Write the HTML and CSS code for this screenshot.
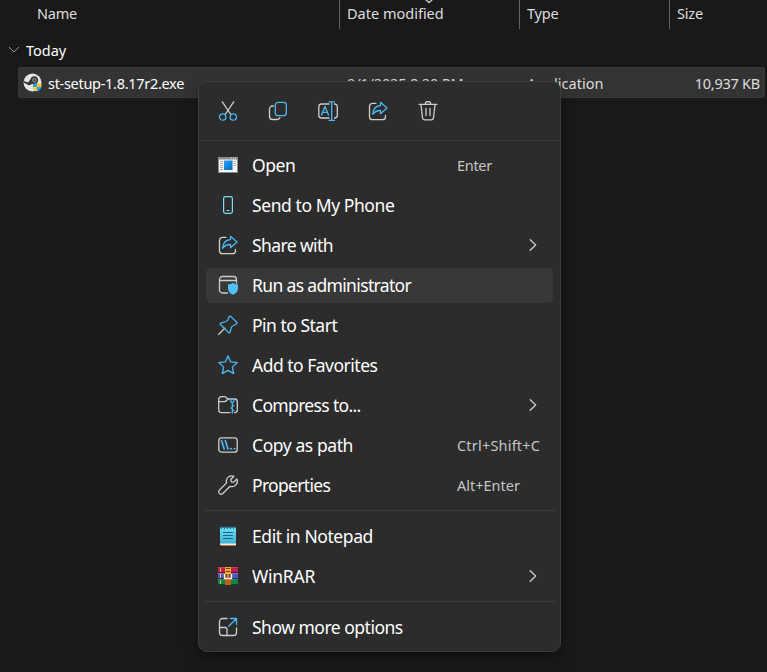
FILE: index.html
```html
<!DOCTYPE html>
<html lang="en">
<head>
<meta charset="utf-8">
<title>Downloads</title>
<link rel="stylesheet" href="styles.css">
</head>
<body>
<svg width="0" height="0" class="defs">
  <defs>
    <symbol id="share" viewBox="0 0 20 20"><path class="w" d="M8 2.3H4.5A3 3 0 0 0 1.5 5.3v10.4a3 3 0 0 0 3 3h10a3 3 0 0 0 3-3v-1.2"/><path class="b" d="M12.5 1.3 19 7l-6.500 5.700V9.500C9 9.400 6.800 10.500 4.700 13.300 4.900 8.500 7.500 5 12.500 4.500z"/></symbol>
    <symbol id="chev" viewBox="0 0 8 12"><path class="w" d="M1.200.7 6.700 6l-5.500 5.300"/></symbol>
    <linearGradient id="win" x1="0" y1="0" x2="1" y2="1"><stop offset="0" stop-color="#2aa0f2"/><stop offset="1" stop-color="#0568c4"/></linearGradient>
    <linearGradient id="note" x1="0" y1="0" x2="0" y2="1"><stop offset="0" stop-color="#6adcf6"/><stop offset="1" stop-color="#3fb3d6"/></linearGradient>
  </defs>
</svg>
<main class="explorer">
  <header class="columns">
    <div class="col name">Name</div>
    <div class="col date"><span class="date-label">Date modified</span><svg class="sort" width="8" height="4" viewBox="0 0 8 4"><path class="w" d="M1 0l3 2.500L7 0"/></svg></div>
    <div class="col type">Type</div>
    <div class="col size">Size</div>
  </header>
  <div class="group"><svg width="12" height="8" viewBox="0 0 12 8"><path d="M1 1l5 5 5-5" fill="none" stroke="#999"/></svg><span>Today</span></div>
  <div class="file">
    <svg class="app" width="19" height="19" viewBox="0 0 19 19"><circle cx="9.500" cy="9.500" r="9" fill="#e6e6e6"/><path d="M.6 9.500l5 2.800c1.500 0 2.500-.8 4.400-1.500a3.900 3.900 0 1 0-2.500-4.500L5 9.500.7 8z" fill="#333"/><circle cx="11.400" cy="7.200" r="1.800" fill="#444" stroke="#999"/><path d="M10 11l4-1v4H10z" fill="#259fe5"/><path d="M14 10l4.500 1v3H14zM10 14h4v4.500c-2-.8-3.600-2-4-4.500z" fill="#ffc92b"/><path d="M14 14h4.500c-.4 2.300-2 3.700-4.500 4.500z" fill="#259fe5"/></svg>
    <span class="fname">st-setup-1.8.17r2.exe</span><span class="fdate">9/1/2025 8:20 PM</span><span class="ftype">Application</span><span class="fsize">10,937 KB</span>
  </div>
</main>
<nav class="menu">
  <div class="tools">
    <svg class="icon" viewBox="0 0 20 20"><path class="w" d="M4.300.8 12.800 13.500M15.700.8 7.200 13.500"/><circle class="b" cx="4.700" cy="16" r="3.200"/><circle class="b" cx="15.300" cy="16" r="3.200"/></svg>
    <svg class="icon" viewBox="0 0 20 20"><path class="w" d="M5.500 5H4.500A3 3 0 0 0 1.500 8v7.500a3 3 0 0 0 3 3h4.700a3 3 0 0 0 2.700-2"/><rect class="b" x="7.300" y="1.300" width="11" height="13.400" rx="2.800"/></svg>
    <svg class="icon" viewBox="0 0 20 20"><path class="w" d="M11 3H3.500A2.800 2.800 0 0 0 .8 5.800v8.400A2.800 2.800 0 0 0 3.500 17H11M16.500 3a2.800 2.800 0 0 1 2.800 2.800v8.400a2.800 2.800 0 0 1-2.800 2.800"/><path class="b" d="M11 .8h5.500M11 19.300h5.500M13.700.8v18.500M3.500 14 7 5.500l3.500 8.500M4.700 11.300h4.700"/></svg>
    <svg class="icon" viewBox="0 0 20 20"><use href="#share"/></svg>
    <svg class="icon" viewBox="0 0 20 20"><path class="w" d="M1 3.300h18M7.300 3V2.700a2.700 2.200 0 0 1 5.400 0V3M3 3.500l1.500 13.300a2.300 2.300 0 0 0 2.300 2h6.400a2.300 2.300 0 0 0 2.300-2L17 3.500M8 7.500v7M12 7.500v7"/></svg>
  </div>
  <div class="items">
    <div class="item"><svg class="icon" viewBox="0 0 20 20"><path d="M0 2h20v16H0z" fill="#8b8b8b"/><path d="M1 4.500h18V17H1z" fill="#f6f6f6"/><path d="M13 3h1M15 3h1M17 3h1" stroke="#eee"/><path d="M6 5.500h8.500V15H6z" fill="url(#win)"/><path d="M2 6.500h3M2 8.500h3M2 10.500h3M2 12.500h3M2 14.500h3M15.500 6.500H18M15.500 8.500H18M15.500 10.500H18" stroke="#aaa"/></svg><span class="label open">Open</span><span class="key enter">Enter</span></div>
    <div class="item"><svg class="icon" viewBox="0 0 20 20"><rect x="5.600" y="1.600" width="8.800" height="16.800" rx="1.800" fill="none" stroke="#7fdcf5" stroke-width="1.200"/><path d="M8.500 15.500h3" stroke="#7fdcf5"/></svg><span class="label send">Send to My Phone</span></div>
    <div class="item"><svg class="icon" viewBox="0 0 20 20"><use href="#share"/></svg><span class="label share">Share with</span><svg class="chev"><use href="#chev"/></svg></div>
    <div class="item hot"><svg class="icon" viewBox="0 0 20 20"><path class="w" d="M9.500 18H4.500a3 3 0 0 1-3-3V4.500a3 3 0 0 1 3-3h11a3 3 0 0 1 3 3V8M1.500 5.500h17"/><path d="M15 7.800c1.500 1.200 3.200 1.600 5 1.700v4c0 3-2 5-5 6.300-3-1.300-5-3.300-5-6.300v-4c1.800-.1 3.500-.5 5-1.700z" fill="#4fc0fa"/></svg><span class="label run">Run as administrator</span></div>
    <div class="item"><svg class="icon" viewBox="0 0 20 20"><path class="w" d="M6.800 13.200.5 19.500"/><path class="b" d="M12.200.9 19.100 7.800C18.800 9 18 9.400 14.500 11c-1 .5-1.200 1-2.500 6.300-.5.700-1 .7-1.500.2L2.500 9.500c-.5-.5-.4-1 .2-1.300L8 6.500c1-.4 1.300-.8 1.800-1.800 1.200-2.600 1.400-3.400 2.400-3.800z"/></svg><span class="label pin">Pin to Start</span></div>
    <div class="item"><svg class="icon" viewBox="0 0 20 20"><path class="b" d="m10 .9 2.700 6 6.500.7-4.800 4.500 1.300 6.500L10 15.400l-5.700 3.200 1.300-6.500L.8 7.600l6.500-.7z"/></svg><span class="label fav">Add to Favorites</span></div>
    <div class="item"><svg class="icon" viewBox="0 0 20 20"><path class="w" d="M12 17.700H3.500A2.800 2.800 0 0 1 .7 15V4.500a2.800 2.800 0 0 1 2.800-2.800h3c1.500 0 2 .9 3.200 2.300h6.800a2.800 2.800 0 0 1 2.800 2.800V15a2.800 2.800 0 0 1-2.800 2.700M.7 6.700h5.600c1.500 0 2-.8 3.200-2.300"/><path class="b" d="M12.700 4v2.500l1.600 1.300 1.600-1.300V4M14.300 8v10M14.300 10.500h1.500M13 13h1.300M14.300 15.500h1.500"/></svg><span class="label zip">Compress to...</span><svg class="chev"><use href="#chev"/></svg></div>
    <div class="item"><svg class="icon" viewBox="0 0 20 20"><rect class="w" x=".8" y="2.800" width="18.400" height="14.400" rx="2.800"/><path class="b path" d="M3.500 5.500 6.200 14M7.300 5.500 10 14M12.700 13.700h.6M16.200 13.700h.6"/></svg><span class="label copy">Copy as path</span><span class="key csc">Ctrl+Shift+C</span></div>
    <div class="item"><svg class="icon" viewBox="0 0 20 20"><path class="w" d="M16 1.300c-3.800-1.600-7.900 1-7.700 4.900 0 .7.100 1.200.3 1.700L1.500 15a2.300 2.300 0 0 0 0 3.500c.9.900 2.300.9 3.300 0l7.300-7.200c4.500 1.500 8.700-3 6.700-7.300L15.600 7.200l-2.300-.4-.5-2.300z"/></svg><span class="label prop">Properties</span><span class="key ae">Alt+Enter</span></div>
    <hr>
    <div class="item"><svg class="icon" viewBox="0 0 20 20"><path d="M2 1.500h16v17H2z" fill="url(#note)"/><path d="M2 17.500h16V19H2z" fill="#eee"/><path d="M3 19h15v1H3z" fill="#c57635"/><path d="M3.500 0v3M6.500 0v3M9.500 0v3M12.500 0v3M15.500 0v3" stroke="#16657d"/><path d="M5 6.500h10M5 9.500h10M5 12.500h10" stroke="#176787" stroke-width="1.200"/></svg><span class="label edit">Edit in Notepad</span></div>
    <div class="item"><svg class="icon" viewBox="0 0 20 20"><path d="M0 1h20v6H0z" fill="#b91f48"/><path d="M0 7h20v6H0z" fill="#5555bd"/><path d="M0 13h20v5.500H0z" fill="#128347"/><path d="M0 1h20v1H0z" fill="#d04060"/><path d="M0 6h20v1H0z" fill="#650c28"/><path d="M0 7h20v1H0z" fill="#7c7bd0"/><path d="M0 12h20v1H0z" fill="#28266f"/><path d="M0 13h20v1H0z" fill="#239a57"/><path d="M0 18h20v1H0z" fill="#054d24"/><path d="M2.500 2v4M2.500 8v4M2.500 14v4" stroke="#edc13e"/><path d="M7 1h6v18H7z" fill="#c35b16"/><path d="M7 1h6v7H7z" fill="#f4a72d"/><path d="M8 2.500h4M8 5.500h4" stroke="#704111"/><path d="M6.500 8v4.500h7V8" fill="none" stroke="#eee" stroke-width="1.300"/><path d="M8.500 8h3v3h-3z" fill="#5f3a1c"/><path d="M9.500 7h1v4h-1z" fill="#ffda8b"/></svg><span class="label rar">WinRAR</span><svg class="chev"><use href="#chev"/></svg></div>
    <hr>
    <div class="item"><svg class="icon" viewBox="0 0 20 20"><path class="w" d="M9 1.500H4.500a3 3 0 0 0-3 3v11a3 3 0 0 0 3 3h11a3 3 0 0 0 3-3V11M1.500 10.500H7a2 2 0 0 1 2 2v6"/><path class="b" d="M12.500 1.500H18.500V7.500M18 2 10.700 9.300"/></svg><span class="label more">Show more options</span></div>
  </div>
</nav>
</body>
</html>
```
FILE: styles.css
```css
* { box-sizing: border-box; }
body {
  margin: 0;
  height: 672px;
  overflow: hidden;
  background: #191919;
  color: #dedede;
  font: 14.5px/20px "Noto Sans", "Open Sans", sans-serif;
  white-space: nowrap;
}
.defs { position: absolute; }
.w { fill: none; stroke: #cecece; stroke-width: 1.3; stroke-linecap: round; stroke-linejoin: round; }
.b { fill: none; stroke: #4bb8f2; stroke-width: 1.3; stroke-linecap: round; stroke-linejoin: round; }
.path { stroke-width: 1.7; }
.columns { display: grid; grid-template-columns: 339px 180px 150px 1fr; height: 29px; }
.col { position: relative; padding: 3px 0 0 7px; border-left: 1px solid #636363; }
.name { padding-left: 37px; border: 0; letter-spacing: -.25px; }
.type, .size { letter-spacing: -.2px; }
.sort { position: absolute; left: 85px; top: 0; }
.group { display: flex; align-items: center; gap: 6px; height: 38px; padding: 4px 0 0 8px; color: #fff; }
.file {
  display: grid;
  grid-template-columns: 29px 299px 180px 130px 1fr;
  align-items: center;
  width: 747px;
  height: 31px;
  margin-left: 18px;
  padding: 1px 4px 0 0;
  background: #333;
  border: 1px solid #383838;
  border-radius: 2px;
}
.app { margin-left: 4px; margin-bottom: 2px; }
.fname { color: #fff; letter-spacing: -.3px; }
.fdate { letter-spacing: -.15px; }
.fsize { text-align: right; letter-spacing: -.25px; }
.menu {
  position: absolute;
  left: 198px;
  top: 81px;
  width: 363px;
  height: 571px;
  background: #2c2c2c;
  border: 1px solid #3d3d3d;
  border-radius: 9px;
  box-shadow: 0 6px 14px rgba(0, 0, 0, .36);
}
.tools { display: flex; align-items: center; gap: 30px; height: 59px; padding-left: 19px; border-bottom: 1px solid #3d3d3d; }
.icon { width: 20px; height: 20px; flex: none; }
.items { padding: 5px 7px 0; }
.item {
  display: grid;
  grid-template-columns: 20px 191px 1fr;
  column-gap: 14px;
  align-items: center;
  height: 35px;
  margin: 2px 0 5px;
  padding: 0 0 1px 12px;
  border-radius: 5px;
  color: #fff;
}
.hot { background: #383838; }
.label { font-size: 17.5px; line-height: 24px; letter-spacing: -.42px; }
.label.share { letter-spacing: -.6px; }
.label.run { letter-spacing: -.65px; }
.pin, .fav, .more { letter-spacing: -.5px; }
.zip { letter-spacing: -.66px; }
.prop { letter-spacing: -.69px; }
.rar { letter-spacing: -.25px; }
.key { color: #c6c6c6; }
.enter { letter-spacing: -.3px; }
.csc { letter-spacing: .2px; }
.chev { width: 8px; height: 12px; margin-left: 72px; }
hr { height: 1px; margin: 7px -2px 8px; border: 0; background: #3d3d3d; }
```
